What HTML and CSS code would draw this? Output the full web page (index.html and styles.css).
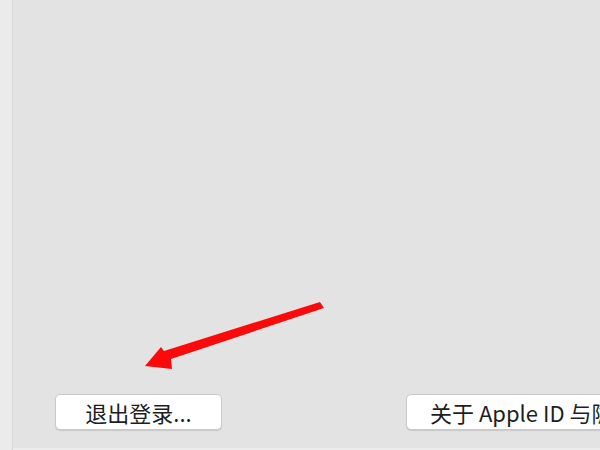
FILE: index.html
```html
<!DOCTYPE html>
<html lang="zh">
<head>
<meta charset="utf-8">
<link rel="stylesheet" href="styles.css">
</head>
<body>
<div class="window">
  <div class="sidebar"></div>
  <div class="main">
    <div class="spacer"></div>
    <div class="buttons">
      <button class="btn btn-logout">退出登录...</button>
      <button class="btn btn-about">关于 Apple ID 与隐私</button>
    </div>
    <div class="footer-line"></div>
  </div>
  <svg class="arrow" width="600" height="450" viewBox="0 0 600 450">
    <polygon points="320,302 324,308 171,359 172,369 145,366 161,347 164,351" fill="#fa0a0a"/>
  </svg>
</div>
</body>
</html>
```
FILE: styles.css
```css
html, body {
  margin: 0;
  padding: 0;
  width: 600px;
  height: 450px;
  overflow: hidden;
}
.window {
  position: relative;
  display: flex;
  width: 600px;
  height: 450px;
  background: #e3e3e3;
  font-family: "Noto Sans CJK SC", "Liberation Sans", sans-serif;
}
.sidebar {
  width: 12px;
  flex: none;
  background: #ebebeb;
  border-right: 1px solid #d8d8d8;
}
.main {
  flex: 1;
  display: flex;
  flex-direction: column;
  min-width: 0;
}
.spacer {
  flex: 1;
}
.buttons {
  display: flex;
  padding-left: 42px;
  gap: 184px;
  margin-bottom: 18px;
  white-space: nowrap;
}
.btn {
  flex: none;
  height: 36px;
  background: #ffffff;
  border: 1px solid #c9c9c9;
  border-radius: 5px;
  box-shadow: 0 1px 1px rgba(0,0,0,0.12);
  font-family: "Noto Sans CJK SC", "Liberation Sans", sans-serif;
  font-size: 22px;
  color: #1e1e1e;
  padding: 0;
  line-height: 34px;
  text-align: center;
}
.btn-logout {
  width: 167px;
}
.btn-about {
  width: 240px;
  text-align: left;
  padding-left: 23px;
}
.footer-line {
  height: 2px;
  background: #ececec;
}
.arrow {
  position: absolute;
  left: 0;
  top: 0;
  pointer-events: none;
}
```
